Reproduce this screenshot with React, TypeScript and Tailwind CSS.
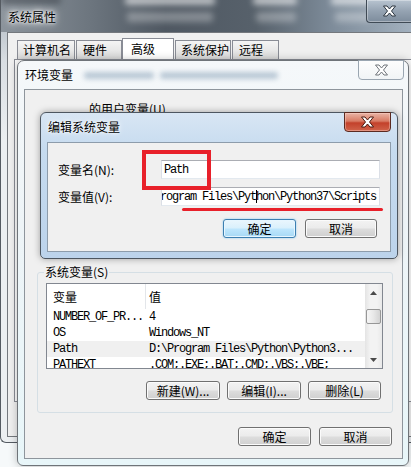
import React from "react";

function XGlyph({ fill, stroke }: { fill: string; stroke: string }) {
  return (
    <svg width="15" height="12" viewBox="0 0 15 12">
      <polygon
        points="1.5,1 5,1 7.5,4 10,1 13.5,1 9.5,6 13.5,11 10,11 7.5,8 5,11 1.5,11 5.5,6"
        fill={fill}
        stroke={stroke}
        strokeWidth="1"
        strokeLinejoin="round"
      />
    </svg>
  );
}

const btn =
  "flex h-[19px] items-center justify-center rounded-[3px] border border-[#707070] bg-[linear-gradient(180deg,#f3f3f3_0%,#ebebeb_48%,#dddddd_52%,#cfcfcf_100%)] shadow-[inset_0_0_0_1px_#fbfbfb] leading-[12px]";

const btnFocus =
  "flex h-[19px] items-center justify-center rounded-[3px] border border-[#3c7fb1] bg-[linear-gradient(180deg,#eaf6fd_0%,#d9f0fc_48%,#bee6fd_52%,#a7d9f5_100%)] shadow-[inset_0_0_0_1px_#e6f6ff,0_0_2px_#7ec4ee] leading-[12px]";

const tab =
  "h-[19px] border border-b-0 border-[#898c95] bg-[linear-gradient(180deg,#f4f4f4_0%,#e8e8e8_50%,#d9d9d9_100%)] pl-[5px] leading-[18px]";

const mono = "font-['Liberation_Mono',monospace] text-[12px] tracking-[-1.2px] leading-[12px]";

const rows = [
  { n: "NUMBER_OF_PR...", v: "4", sel: false },
  { n: "OS", v: "Windows_NT", sel: false },
  { n: "Path", v: "D:\\Program Files\\Python\\Python3...", sel: true },
  { n: "PATHEXT", v: ".COM;.EXE;.BAT;.CMD;.VBS;.VBE;", sel: false },
];

const blobs = [
  { c: "left-[124px] top-[-4px] w-[90px] h-[9px] bg-white/60" },
  { c: "left-[252px] top-[-4px] w-[44px] h-[9px] bg-white/60" },
  { c: "left-[330px] top-[-4px] w-[46px] h-[9px] bg-white/60" },
  { c: "left-[126px] top-[12px] w-[86px] h-[10px] bg-white/30" },
  { c: "left-[255px] top-[12px] w-[40px] h-[10px] bg-white/30" },
  { c: "left-[334px] top-[12px] w-[38px] h-[10px] bg-white/30" },
  { c: "left-[0px] top-[-4px] w-[60px] h-[8px] bg-[#2f363d]/50" },
];

export default function App() {
  return (
    <div className="relative h-[467px] w-[411px] overflow-hidden bg-[#f6f9fa] font-['Noto_Sans_CJK_SC',sans-serif] text-[12px] text-black">
      {/* Outer window: 系统属性 */}
      <div className="absolute left-0 top-0 h-[443px] w-[412px] overflow-hidden rounded-bl-[6px] border-b border-l border-[#555b62] bg-[linear-gradient(180deg,#aab3bc_0px,#d8dde2_60px,#eceff1_140px)]">
        <div className="relative h-[32px] overflow-hidden bg-[linear-gradient(90deg,#8c949c_0%,#6c757e_22%,#4f5862_40%,#57616b_62%,#7d8b99_80%,#a3b1bf_100%)]">
          {blobs.map((b, i) => (
            <div key={i} className={`absolute rounded-[3px] blur-[3px] ${b.c}`} />
          ))}
          <div className="relative flex h-full items-start justify-between">
            <span className="pl-[7px] pt-[11px] leading-[12px] [text-shadow:0_0_6px_#fff,0_0_10px_#fff,0_0_3px_#fff]">系统属性</span>
            <div className="-mt-px flex h-[24px] w-[46px] items-center justify-center rounded-bl-[4px] border border-r-0 border-[#3f4a55] bg-[linear-gradient(180deg,#b8c4d0_0%,#95a3b2_50%,#7d8c9c_100%)] shadow-[inset_0_0_0_1px_rgba(255,255,255,0.35)]">
              <XGlyph fill="#ffffff" stroke="#2c3640" />
            </div>
          </div>
        </div>
        {/* body */}
        <div className="ml-[6px] h-[405px] border border-r-0 border-[#74787d] bg-[#f0f0f0]">
          <div className="ml-[9px] mt-[5px] flex h-[21px] items-end">
            <div className={`${tab} w-[58px]`}>计算机名</div>
            <div className={`${tab} ml-[1px] w-[46px] pl-[6px]`}>硬件</div>
            <div className="h-[21px] w-[52px] border border-b-0 border-[#898c95] bg-white pl-[8px] leading-[20px]">高级</div>
            <div className={`${tab} ml-[1px] w-[56px] pl-[4px]`}>系统保护</div>
            <div className={`${tab} ml-[1px] w-[47px] pl-[6px]`}>远程</div>
          </div>
          <div className="ml-[6px] h-[343px] border border-r-0 border-[#898c95] bg-[#fcfcfc]" />
        </div>
      </div>

      {/* 环境变量 window */}
      <div className="absolute left-[17px] top-[60px] flex h-[406px] w-[392px] flex-col rounded-t-[7px] rounded-b-[6px] border border-[#6f7479] bg-[linear-gradient(180deg,#f5f8fa_0%,#eef4f7_40%,#e8f6f9_100%)] shadow-[0_0_8px_rgba(0,0,0,0.25)]">
        <div className="relative flex h-[28px] items-start justify-between pl-[7px] pr-[4px]">
          <span className="pt-[8px] leading-[12px]">环境变量</span>
          <div className="absolute left-[66px] top-[11px] h-[7px] w-[70px] rounded-[3px] bg-[#9fb3c6]/70 blur-[2.5px]" />
          <div className="absolute left-[142px] top-[11px] h-[7px] w-[118px] rounded-[3px] bg-[#9fb3c6]/70 blur-[2.5px]" />
          <div className="-mt-px flex h-[20px] w-[46px] items-center justify-center rounded-b-[4px] border border-[#9aa6b1] bg-[linear-gradient(180deg,#fdfdfd_0%,#f1f4f6_100%)]">
            <XGlyph fill="#ffffff" stroke="#6f747a" />
          </div>
        </div>
        <div className="ml-[6px] mr-[5px] flex h-[370px] flex-col border border-[#8e959c] bg-[#f0f0f0]">
          <div className="mt-[13px] h-[12px] pl-[64px] leading-[12px]">的用户变量(U)</div>
          {/* 系统变量 group */}
          <div className="relative ml-[12px] mt-[157px] flex h-[141px] w-[356px] flex-col rounded-[3px] border border-[#d5dfe5]">
            <span className="absolute left-[6px] top-[-7px] bg-[#f0f0f0] px-[1px] leading-[12px]">系统变量(S)</span>
            <div className="ml-[8px] mt-[10px] flex h-[86px] w-[337px] overflow-hidden border border-[#828790] bg-white">
              <div className="min-w-0 flex-1">
                <div className="flex h-[25px] items-center">
                  <div className="flex h-full w-[99px] items-center border-r border-[#e3e6ea] pl-[6px] leading-[12px]">变量</div>
                  <div className="pl-[3px] leading-[12px]">值</div>
                </div>
                {rows.map((r) => (
                  <div key={r.n} className={`flex h-[16px] items-center whitespace-nowrap ${r.sel ? "bg-[#f0f0f0]" : ""}`}>
                    <div className={`w-[102px] pl-[6px] ${mono}`}>{r.n}</div>
                    <div className={mono}>{r.v}</div>
                  </div>
                ))}
              </div>
              <div className="flex w-[17px] flex-col bg-[linear-gradient(90deg,#e4e4e4_0%,#f3f3f3_30%,#f3f3f3_70%,#e9e9e9_100%)]">
                <div className="flex h-[17px] items-center justify-center">
                  <svg width="7" height="4" viewBox="0 0 7 4">
                    <polygon points="3.5,0 7,4 0,4" fill="#4a4a4a" />
                  </svg>
                </div>
                <div className="flex-1 px-[1px] pt-[8px]">
                  <div className="h-[15px] rounded-[2px] border border-[#979797] bg-[linear-gradient(90deg,#f6f6f6_0%,#e8e8e8_50%,#d3d3d3_100%)]" />
                </div>
                <div className="flex h-[17px] items-center justify-center">
                  <svg width="7" height="4" viewBox="0 0 7 4">
                    <polygon points="0,0 7,0 3.5,4" fill="#4a4a4a" />
                  </svg>
                </div>
              </div>
            </div>
            <div className="mt-[12px] flex justify-end gap-[7px] pr-[11px]">
              <div className={`${btn} w-[74px]`}>新建(W)...</div>
              <div className={`${btn} w-[74px]`}>编辑(I)...</div>
              <div className={`${btn} w-[73px]`}>删除(L)</div>
            </div>
          </div>
          <div className="mt-[14px] flex justify-end gap-[8px] pr-[10px]">
            <div className={`${btn} w-[73px]`}>确定</div>
            <div className={`${btn} w-[73px]`}>取消</div>
          </div>
        </div>
      </div>

      {/* 编辑系统变量 dialog */}
      <div className="absolute left-[40px] top-[112px] flex h-[147px] w-[358px] flex-col rounded-t-[6px] rounded-b-[5px] border border-[#4d5660] bg-[linear-gradient(180deg,#d8e6f4_0%,#c6dbef_25%,#bcd3eb_100%)] shadow-[0_0_7px_rgba(0,0,0,0.35)]">
        <div className="flex h-[29px] items-start justify-between pl-[7px] pr-[6px]">
          <span className="pt-[8px] leading-[12px] [text-shadow:0_0_6px_#fff,0_0_3px_#fff]">编辑系统变量</span>
          <div className="-mt-px flex h-[20px] w-[47px] items-center justify-center rounded-b-[4px] border border-[#5b2a20] bg-[linear-gradient(180deg,#e9b4a6_0%,#d87b64_45%,#c3412b_55%,#d0634a_100%)] shadow-[inset_0_0_0_1px_rgba(255,220,210,0.4)]">
            <XGlyph fill="#ffffff" stroke="#4a1a10" />
          </div>
        </div>
        <div className="mx-[6px] flex h-[110px] flex-col border border-[#8d9cab] bg-[#f0f0f0] pt-[17px]">
          <div className="flex h-[19px] items-center">
            <span className="w-[113px] pl-[10px] leading-[12px]">变量名(N):</span>
            <div className={`flex h-[19px] w-[219px] items-center border border-[#abadb3] border-x-[#dbdfe6] border-b-[#e3e9ef] bg-white pl-[2px] ${mono}`}>
              Path
            </div>
          </div>
          <div className="mt-[8px] flex h-[19px] items-center">
            <span className="w-[113px] pl-[10px] leading-[12px]">变量值(V):</span>
            <div className={`flex h-[19px] w-[219px] items-center justify-end overflow-hidden border border-[#abadb3] border-x-[#dbdfe6] border-b-[#e3e9ef] bg-white pr-[3px] ${mono}`}>
              <span className="shrink-0 whitespace-nowrap">
                D:\Program Files\Pyt
                <span className="-mr-px inline-block h-[13px] w-px bg-black align-middle" />
                hon\Python37\Scripts
              </span>
            </div>
          </div>
          <div className="mt-[13px] flex justify-end gap-[9px] pr-[13px]">
            <div className={`${btnFocus} w-[73px]`}>确定</div>
            <div className={`${btn} w-[72px]`}>取消</div>
          </div>
        </div>
      </div>

      {/* annotations */}
      <div className="absolute left-[142px] top-[150px] h-[40px] w-[69px] border-4 border-[#e8202a]" />
      <div className="absolute left-[182px] top-[208px] h-[3px] w-[201px] rounded-full bg-[#e8202a]" />
    </div>
  );
}
